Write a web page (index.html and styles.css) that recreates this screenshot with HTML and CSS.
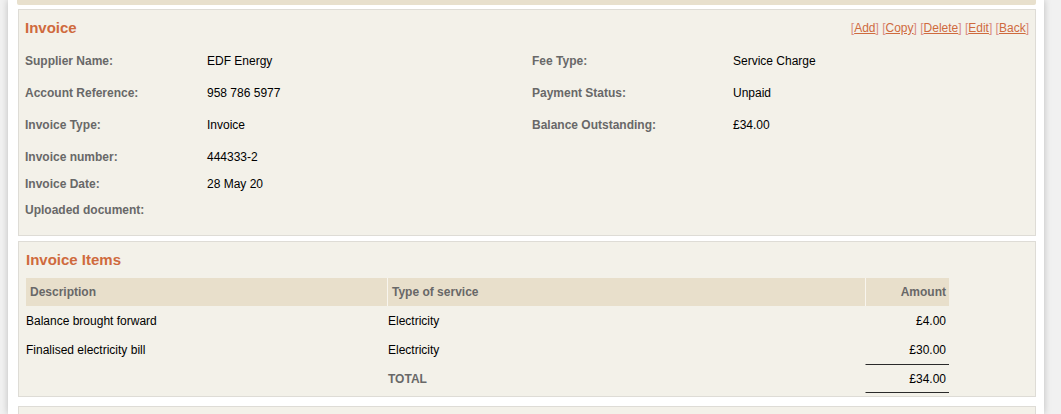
FILE: index.html
```html
<!DOCTYPE html>
<html lang="en">
<head>
<meta charset="utf-8">
<title>Invoice</title>
<link rel="stylesheet" href="styles.css">
</head>
<body>
<div class="page">
  <div class="topbar"></div>

  <section class="panel panel-invoice">
    <div class="panel-head">
      <h2 class="panel-title">Invoice</h2>
      <div class="actions">[<a href="#">Add</a>] [<a href="#">Copy</a>] [<a href="#">Delete</a>] [<a href="#">Edit</a>] [<a href="#">Back</a>]</div>
    </div>
    <div class="details">
      <div class="lbl c1">Supplier Name:</div><div class="val c2">EDF Energy</div>
      <div class="lbl c3">Fee Type:</div><div class="val c4">Service Charge</div>
      <div class="lbl c1">Account Reference:</div><div class="val c2">958 786 5977</div>
      <div class="lbl c3">Payment Status:</div><div class="val c4">Unpaid</div>
      <div class="lbl c1">Invoice Type:</div><div class="val c2">Invoice</div>
      <div class="lbl c3">Balance Outstanding:</div><div class="val c4">£34.00</div>
      <div class="lbl c1">Invoice number:</div><div class="val c2">444333-2</div>
      <div class="lbl c1">Invoice Date:</div><div class="val c2">28 May 20</div>
      <div class="lbl c1">Uploaded document:</div><div class="val c2"></div>
    </div>
  </section>

  <section class="panel panel-items">
    <h2 class="panel-title">Invoice Items</h2>
    <table class="items">
      <colgroup><col class="col-desc"><col class="col-type"><col class="col-amt"></colgroup>
      <thead>
        <tr><th>Description</th><th class="sep">Type of service</th><th class="sep num">Amount</th></tr>
      </thead>
      <tbody>
        <tr><td>Balance brought forward</td><td class="sep">Electricity</td><td class="sep num">£4.00</td></tr>
        <tr><td>Finalised electricity bill</td><td class="sep">Electricity</td><td class="sep num">£30.00</td></tr>
        <tr class="total"><td></td><td class="sep total-label">TOTAL</td><td class="sep num total-amt">£34.00</td></tr>
      </tbody>
    </table>
  </section>

  <section class="panel panel-next"></section>
</div>
</body>
</html>
```

FILE: styles.css
```css
html {
  background: #f1f1f1;
}
body {
  margin: 0;
  font-family: "Liberation Sans", Arial, sans-serif;
  font-size: 12px;
  color: #000;
}
.page {
  margin-left: 8px;
  width: 1036px;
  height: 414px;
  background: #fff;
  box-shadow: 0 0 7px rgba(0, 0, 0, 0.22);
  overflow: hidden;
}
.topbar {
  height: 5px;
  margin: 0 8px 4px 9px;
  background: #e8e0cd;
  border-radius: 0 0 2px 2px;
}
.panel {
  margin: 0 8px 0 10px;
  background: #f3f1e9;
  border: 1px solid #dedcd6;
}
.panel-invoice {
  padding: 9px 6px 15px 6px;
}
.panel-head {
  display: flex;
  justify-content: space-between;
  align-items: center;
  height: 18px;
  margin-bottom: 8px;
}
.panel-title {
  margin: 0;
  font-size: 15px;
  line-height: 18px;
  font-weight: bold;
  color: #cf6a3d;
}
.actions {
  color: #d98b80;
  font-size: 12px;
  line-height: 18px;
}
.actions a {
  color: #cf6a3d;
  text-decoration: underline;
}
.details {
  display: grid;
  grid-template-columns: 182px 325px 201px 1fr;
  grid-template-rows: 32px 32px 32px 27px 26px 26px;
  align-items: start;
}
.details > div {
  padding-top: 9px;
  line-height: 14px;
}
.c1 { grid-column: 1; }
.c2 { grid-column: 2; }
.c3 { grid-column: 3; }
.c4 { grid-column: 4; }
.lbl {
  font-weight: bold;
  color: #686868;
}
.val {
  color: #000;
}
.panel-items {
  margin-top: 5px;
  padding: 9px 6px 3px 7px;
}
.panel-items .panel-title {
  margin-bottom: 9px;
}
.items {
  width: 923px;
  table-layout: fixed;
  border-collapse: separate;
  border-spacing: 0;
}
.col-desc { width: 361px; }
.col-type { width: 478px; }
.col-amt { width: 84px; }
.items th {
  height: 28px;
  padding: 0 3px 0 4px;
  background: #e8dfcb;
  color: #686868;
  font-weight: bold;
  text-align: left;
  box-sizing: border-box;
}
.items td {
  height: 29px;
  padding: 0;
  box-sizing: border-box;
}
.items .sep {
  border-left: 1px solid transparent;
}
.items th.sep {
  border-left-color: #f8f5ee;
}
.items .num {
  text-align: right;
  padding-right: 3px;
}
.items td.total-label {
  font-weight: bold;
  color: #686868;
}
.items td.total-amt {
  border-top: 1px solid #2a2a2a;
  border-bottom: 1px solid #2a2a2a;
}
.panel-next {
  margin-top: 9px;
  height: 40px;
}
```
